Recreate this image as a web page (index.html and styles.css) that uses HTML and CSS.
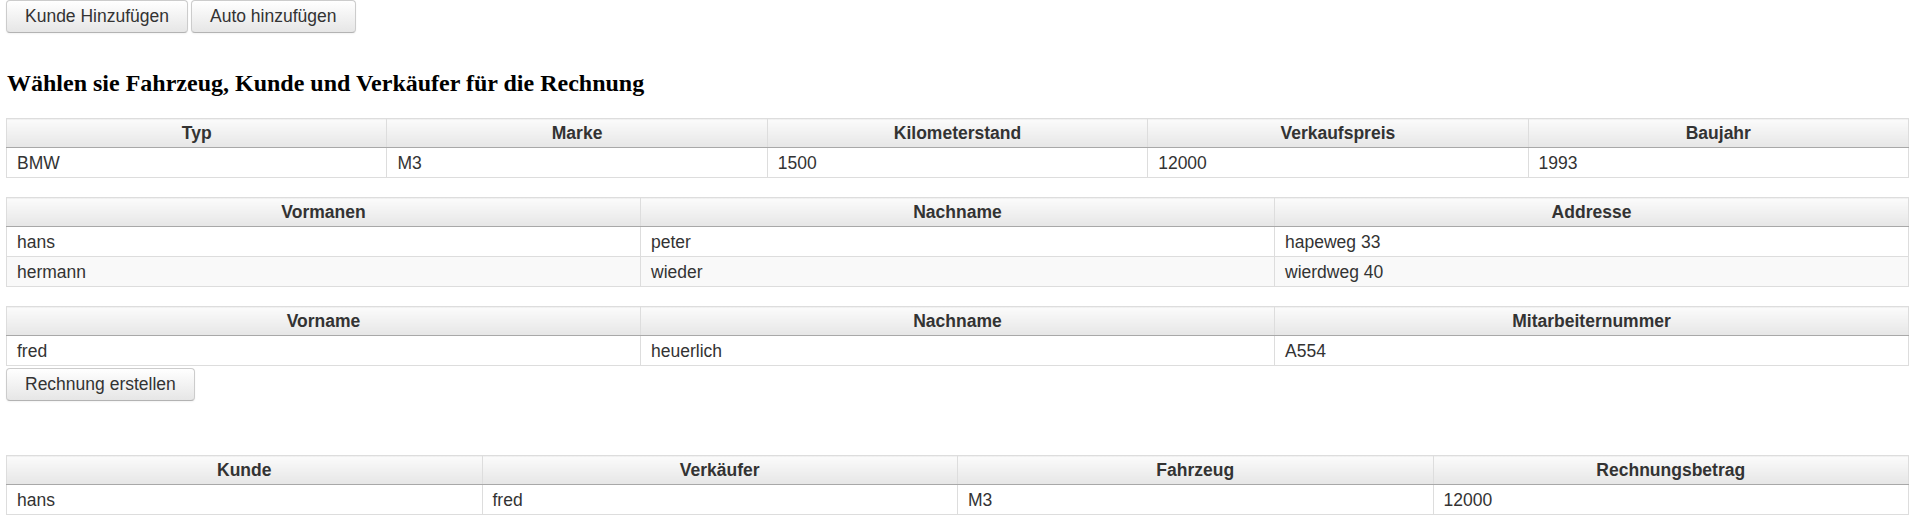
FILE: index.html
```html
<!DOCTYPE html>
<html lang="de">
<head>
<meta charset="utf-8">
<title>Rechnung</title>
<link rel="stylesheet" href="styles.css">
</head>
<body>
<div class="page">
  <div class="toolbar">
    <button class="btn">Kunde Hinzufügen</button>
    <button class="btn">Auto hinzufügen</button>
  </div>

  <h3 class="title">Wählen sie Fahrzeug, Kunde und Verkäufer für die Rechnung</h3>

  <table class="grid">
    <thead>
      <tr><th>Typ</th><th>Marke</th><th>Kilometerstand</th><th>Verkaufspreis</th><th>Baujahr</th></tr>
    </thead>
    <tbody>
      <tr><td>BMW</td><td>M3</td><td>1500</td><td>12000</td><td>1993</td></tr>
    </tbody>
  </table>

  <table class="grid">
    <thead>
      <tr><th>Vormanen</th><th>Nachname</th><th>Addresse</th></tr>
    </thead>
    <tbody>
      <tr><td>hans</td><td>peter</td><td>hapeweg 33</td></tr>
      <tr><td>hermann</td><td>wieder</td><td>wierdweg 40</td></tr>
    </tbody>
  </table>

  <table class="grid grid-tight">
    <thead>
      <tr><th>Vorname</th><th>Nachname</th><th>Mitarbeiternummer</th></tr>
    </thead>
    <tbody>
      <tr><td>fred</td><td>heuerlich</td><td>A554</td></tr>
    </tbody>
  </table>

  <div class="actions">
    <button class="btn">Rechnung erstellen</button>
  </div>

  <table class="grid">
    <thead>
      <tr><th>Kunde</th><th>Verkäufer</th><th>Fahrzeug</th><th>Rechnungsbetrag</th></tr>
    </thead>
    <tbody>
      <tr><td>hans</td><td>fred</td><td>M3</td><td>12000</td></tr>
    </tbody>
  </table>
</div>
</body>
</html>
```

FILE: styles.css
```css
html, body {
  margin: 0;
  padding: 0;
  background: #ffffff;
}

body {
  font-family: "Liberation Sans", Arial, sans-serif;
  font-size: 17.5px;
  color: #333333;
}

.page {
  padding: 0 7px 0 6px;
}

.toolbar {
  display: flex;
  gap: 3px;
}

.btn {
  font-family: "Liberation Sans", Arial, sans-serif;
  font-size: 17.5px;
  line-height: 21px;
  color: #333333;
  padding: 5px 18px;
  border: 1px solid #cccccc;
  border-bottom-color: #b3b3b3;
  border-radius: 4px;
  background-color: #f0f0f0;
  background-image: linear-gradient(to bottom, #ffffff, #e6e6e6);
  box-shadow: inset 0 1px 0 rgba(255,255,255,0.2), 0 1px 2px rgba(0,0,0,0.05);
  cursor: pointer;
}

.title {
  font-family: "Liberation Serif", "Times New Roman", serif;
  font-size: 24px;
  font-weight: bold;
  color: #000000;
  margin: 37px 0 21px 1px;
  line-height: 27px;
}

.grid {
  width: 100%;
  table-layout: fixed;
  border-collapse: collapse;
  border: 1px solid #dddddd;
  margin-bottom: 19px;
}

.grid-tight {
  margin-bottom: 2px;
}

.grid th {
  font-size: 17.5px;
  font-weight: bold;
  color: #333333;
  text-align: center;
  height: 20px;
  line-height: 20px;
  padding: 4px 10px 4px;
  border: 1px solid #dddddd;
  border-bottom: 1px solid #a8a8a8;
  background-color: #ececec;
  background-image: linear-gradient(to bottom, #fbfbfb, #e6e6e6);
}

.grid td {
  text-align: left;
  height: 20px;
  line-height: 20px;
  padding: 5px 10px 4px;
  border: 1px solid #dddddd;
  white-space: nowrap;
}

.grid tbody tr:nth-child(even) td {
  background-color: #f9f9f9;
}

.actions {
  margin-bottom: 54px;
}
```
